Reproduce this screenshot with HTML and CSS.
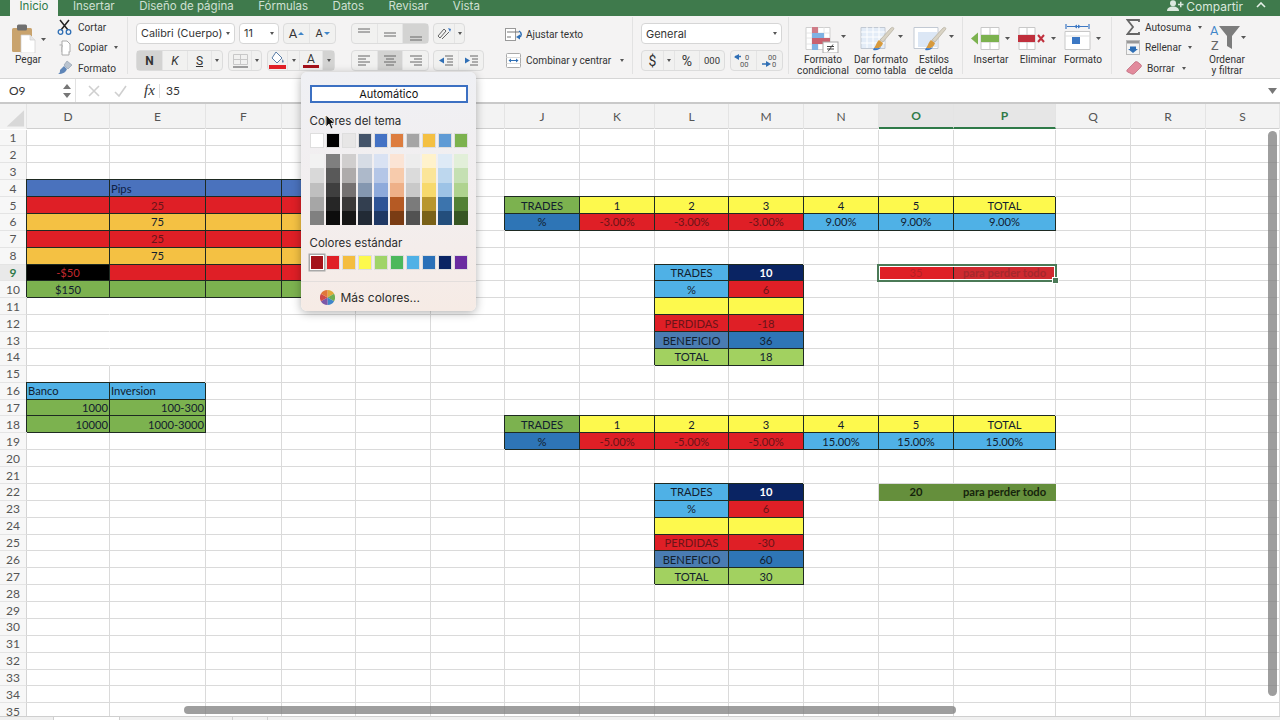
FILE: index.html
```html
<!DOCTYPE html>
<html lang="es">
<head>
    <meta charset="UTF-8">
    <title>Excel - Inicio</title>
    <link rel="stylesheet" href="styles.css">
</head>
<body>
    <!-- pestañas -->
    <div class="tabbar">
        <div class="tab active">Inicio</div>
        <div class="tab">Insertar</div>
        <div class="tab">Diseño de página</div>
        <div class="tab">Fórmulas</div>
        <div class="tab">Datos</div>
        <div class="tab">Revisar</div>
        <div class="tab">Vista</div>
        <div class="share">
            <svg width="17" height="12" viewBox="0 0 17 12"><circle cx="6" cy="3.2" r="3" fill="#dbe8de"/><path d="M0 11c0-3 2.5-4.5 6-4.5s6 1.500 6 4.5z" fill="#dbe8de"/><path d="M11 4.5h5.5M13.75 1.8v5.4" stroke="#dbe8de" stroke-width="1.5"/></svg>
            <span>Compartir</span>
            <svg class="chev" width="10" height="6" viewBox="0 0 10 6"><path d="M1 5l4-4 4 4" fill="none" stroke="#e6f0e8" stroke-width="1.6"/></svg>
        </div>
    </div>

    <!-- cinta -->
    <div class="ribbon">
        <div class="group g-clip">
            <div class="big paste">
                <svg width="38" height="30" viewBox="0 0 38 30"><rect x="1" y="5" width="20" height="24" rx="1.5" fill="#c9a36d"/><rect x="6" y="1.5" width="10" height="6" rx="1.5" fill="#6f6f6f"/><path d="M10 12h9l5 5v13H10z" fill="#fff" stroke="#cfcfcf" stroke-width=".7"/><path d="M19 12v5h5" fill="#e6e6e6" stroke="#cfcfcf" stroke-width=".7"/><path d="M30 15h5l-2.5 3z" fill="#555"/></svg>
                <span>Pegar</span>
            </div>
            <div class="small-stack">
                <div class="small">
                    <svg width="16" height="16" viewBox="0 0 16 16"><path d="M3 1l8 10M12 1L4 11" stroke="#222" stroke-width="1.5"/><circle cx="3.5" cy="13" r="2.3" fill="none" stroke="#2f6fb5" stroke-width="1.3"/><circle cx="11.5" cy="13" r="2.3" fill="none" stroke="#2f6fb5" stroke-width="1.3"/></svg>
                    <span>Cortar</span>
                </div>
                <div class="small">
                    <svg width="16" height="16" viewBox="0 0 16 16"><path d="M5 1h5l3 3v8H5z" fill="#fff" stroke="#aaa"/><path d="M2.5 5H5v10h7v-3" fill="#fff" stroke="#aaa"/></svg>
                    <span>Copiar</span><i class="caret"></i>
                </div>
                <div class="small">
                    <svg width="16" height="16" viewBox="0 0 16 16"><path d="M10 1l5 4-4 4-4-4z" fill="#b9c3cf" stroke="#8b98a8" stroke-width=".6"/><path d="M7 6l3 3c-1 3-4 5-9 5 2-1 2-2 2-4z" fill="#5f86b8"/></svg>
                    <span>Formato</span>
                </div>
            </div>
        </div>

        <div class="group g-font">
            <div class="row">
                <div class="select s-font"><span>Calibri (Cuerpo)</span><i class="caret"></i></div>
                <div class="select s-size"><span>11</span><i class="caret"></i></div>
                <div class="btns b-size">
                    <div class="btn w26"><span class="big-a">A</span><i class="tri-up"></i></div>
                    <div class="btn w25"><span class="mid-a">A</span><i class="tri-down"></i></div>
                </div>
            </div>
            <div class="row wide">
                <div class="btns b-style">
                    <div class="btn w26 pressed bold-n">N</div>
                    <div class="btn w25 ital">K</div>
                    <div class="btn w24 under">S</div>
                    <div class="btn w10"><i class="caret"></i></div>
                </div>
                <div class="btns b-border">
                    <div class="btn w23">
                        <svg width="15" height="14" viewBox="0 0 15 14"><path d="M.5.5h14v10H.5zM7.5.5v10M.5 5.5h14" fill="none" stroke="#c8c8c8"/><path d="M0 13h15" stroke="#666" stroke-width="1.2"/></svg>
                    </div>
                    <div class="btn w9"><i class="caret"></i></div>
                </div>
                <div class="btns b-color">
                    <div class="btn w20">
                        <svg width="17" height="19" viewBox="0 0 17 19"><path d="M7 1l6 6-5 5-5-5z" fill="#fff" stroke="#5b7fa8"/><path d="M13.5 8c1 1.5 1.5 2.5 1 3.3-.6.7-1.5.3-1.5-.6z" fill="#5b7fa8"/><rect x="0" y="14" width="17" height="4" fill="#e01f26"/></svg>
                    </div>
                    <div class="btn w12"><i class="caret"></i></div>
                    <div class="btn w23 color-a"><span>A</span><b></b></div>
                    <div class="btn w11 pressed"><i class="caret"></i></div>
                </div>
            </div>
        </div>

        <div class="group g-align">
            <div class="row">
                <div class="btns b-al">
                    <div class="btn"><svg width="14" height="14" viewBox="0 0 14 14"><path d="M1 2h12M1 5h12" stroke="#666"/></svg></div>
                    <div class="btn"><svg width="14" height="14" viewBox="0 0 14 14"><path d="M1 6h12M1 9h12" stroke="#666"/></svg></div>
                    <div class="btn pressed"><svg width="14" height="14" viewBox="0 0 14 14"><path d="M1 10h12M1 13h12" stroke="#666"/></svg></div>
                </div>
                <div class="btns b-orient">
                    <div class="btn w21"><svg width="16" height="15" viewBox="0 0 16 15"><path d="M2 10l6-7 2 2-6 7zM6 13l7-7" fill="none" stroke="#666"/><path d="M12 2l3 1-1 3z" fill="#3c78c4"/></svg></div>
                    <div class="btn w9"><i class="caret"></i></div>
                </div>
            </div>
            <div class="row">
                <div class="btns b-al">
                    <div class="btn"><svg width="14" height="11" viewBox="0 0 14 11"><path d="M1 1h12M1 4h8M1 7h12M1 10h8" stroke="#666"/></svg></div>
                    <div class="btn pressed"><svg width="14" height="11" viewBox="0 0 14 11"><path d="M1 1h12M3 4h8M1 7h12M3 10h8" stroke="#666"/></svg></div>
                    <div class="btn"><svg width="14" height="11" viewBox="0 0 14 11"><path d="M1 1h12M5 4h8M1 7h12M5 10h8" stroke="#666"/></svg></div>
                </div>
                <div class="btns b-indent">
                    <div class="btn w25"><svg width="15" height="11" viewBox="0 0 15 11"><path d="M6 1h8M8 4h6M8 7h6M6 10h8" stroke="#666"/><path d="M5 2.5v6L0 5.5z" fill="#2f6fb5"/></svg></div>
                    <div class="btn w24"><svg width="15" height="11" viewBox="0 0 15 11"><path d="M6 1h8M8 4h6M8 7h6M6 10h8" stroke="#666"/><path d="M1 2.5v6l5-3z" fill="#2f6fb5"/></svg></div>
                </div>
            </div>
        </div>

        <div class="group g-wrap">
            <div class="wrap-item">
                <svg width="17" height="13" viewBox="0 0 17 13"><rect x=".5" y=".5" width="10" height="12" fill="#fff" stroke="#999"/><path d="M2 4h12M2 9h4" stroke="#777"/><path d="M14 3c3 2 3 5 0 6" fill="none" stroke="#2f6fb5" stroke-width="1.5"/><path d="M15 6.5v5l-4-2.5z" fill="#2f6fb5"/></svg>
                <span>Ajustar texto</span>
            </div>
            <div class="wrap-item">
                <svg width="15" height="15" viewBox="0 0 15 15"><rect x=".5" y=".5" width="14" height="14" rx="1" fill="#fff" stroke="#aaa"/><path d="M.5 4.5h14M.5 10.5h14" stroke="#ddd"/><path d="M3 7.5h9" stroke="#2f6fb5"/><path d="M5 5.5l-2.5 2 2.500 2zM10 5.5l2.5 2-2.5 2z" fill="#2f6fb5"/></svg>
                <span>Combinar y centrar</span><i class="caret"></i>
            </div>
        </div>

        <div class="group g-num">
            <div class="select s-num"><span>General</span><i class="caret"></i></div>
            <div class="row wide">
                <div class="btns b-money">
                    <div class="btn w22 money">$</div>
                    <div class="btn w11"><i class="caret"></i></div>
                    <div class="btn w25 money">%</div>
                    <div class="btn w24 thousands">000</div>
                </div>
                <div class="btns b-dec">
                    <div class="btn w26"><svg width="19" height="15" viewBox="0 0 19 15"><path d="M5 1v6L0 4z" fill="#2f6fb5"/><path d="M1 3.5h6" stroke="#2f6fb5" stroke-width="1.5"/><text x="11" y="6.5" class="dec-text">0</text><text x="6" y="14" class="dec-text">00</text></svg></div>
                    <div class="btn w25"><svg width="19" height="15" viewBox="0 0 19 15"><path d="M6 8v6l5-3z" fill="#2f6fb5"/><path d="M2 11h6" stroke="#2f6fb5" stroke-width="1.5"/><text x="8" y="6.5" class="dec-text">00</text><text x="12" y="14" class="dec-text">0</text></svg></div>
                </div>
            </div>
        </div>

        <div class="group g-styles">
            <div class="big w62">
                <svg width="46" height="30" viewBox="0 0 46 30"><path d="M6 4.5h24v22H6z" fill="#fff" stroke="#cfcfcf"/><path d="M6 10h24M6 15h24M6 21h24M12 4v22M18 4v22M24 4v22" stroke="#e0e0e0" stroke-width=".8"/><rect x="12" y="4" width="6" height="6" fill="#cf7c88"/><rect x="12" y="10" width="12" height="5" fill="#7fb2e3"/><rect x="12" y="15" width="18" height="6" fill="#c9626f"/><rect x="12" y="21" width="6" height="6" fill="#7fb2e3"/><rect x="23" y="19" width="15" height="11" fill="#fff" stroke="#aaa"/><path d="M27 23.5h7M27 26h7M33 21.5l-5 7" stroke="#444"/><path d="M41 12h5l-2.5 3z" fill="#555"/></svg>
                <span>Formato<br>condicional</span>
            </div>
            <div class="big w54">
                <svg width="46" height="30" viewBox="0 0 46 30"><path d="M3 4.5h24v21H3z" fill="#e3ecf7" stroke="#c2c9d3"/><path d="M3 9h24M3 14h24M3 20h24M9 4v21M15 4v21M21 4v21" stroke="#fff"/><path d="M33 5c2-1.5 3.5 0 2.5 1.5L25 19l-3-2z" fill="#d9d3c4" stroke="#a9a392" stroke-width=".6"/><path d="M21 17l4 3c-1 4-4 6-9 5 2-2 2-5 5-8z" fill="#d79a3d"/><path d="M16 25c2 .5 5 .5 7-1-1 2-4 4-8 3z" fill="#3a78c5"/><path d="M40 12h5l-2.5 3z" fill="#555"/></svg>
                <span>Dar formato<br>como tabla</span>
            </div>
            <div class="big w52">
                <svg width="42" height="30" viewBox="0 0 42 30"><path d="M1 4.5h24v21H1z" fill="#fff" stroke="#c2c9d3"/><path d="M5 9h19v15H5z" fill="#dce7f5"/><path d="M30 5c2-1.5 3.5 0 2.5 1.5L22 19l-3-2z" fill="#d9d3c4" stroke="#a9a392" stroke-width=".6"/><path d="M18 17l4 3c-1 4-4 6-9 5 2-2 2-5 5-8z" fill="#d79a3d"/><path d="M13 25c2 .5 5 .5 7-1-1 2-4 4-8 3z" fill="#3a78c5"/><path d="M36 12h5l-2.5 3z" fill="#555"/></svg>
                <span>Estilos<br>de celda</span>
            </div>
        </div>

        <div class="group g-cells">
            <div class="big w40">
                <svg width="40" height="30" viewBox="0 0 40 30"><path d="M10 4.5h18v22H10zM19 4v22M10 12h18M10 19h18" fill="#fff" stroke="#c8c8c8"/><rect x="10" y="12" width="18" height="7" fill="#7cb24f"/><path d="M0 15.5l7-6v12z" fill="#7cb24f"/><path d="M34 14h5l-2.5 3z" fill="#555"/></svg>
                <span>Insertar</span>
            </div>
            <div class="big w54">
                <svg width="40" height="30" viewBox="0 0 40 30"><path d="M1 4.5h16v22H1zM9 4v22M1 12h16M1 19h16" fill="#fff" stroke="#c8c8c8"/><rect x="0" y="12" width="17" height="7" fill="#c0303d"/><path d="M20 12l6 7M26 12l-6 7" stroke="#c0303d" stroke-width="2"/><path d="M33 14h5l-2.5 3z" fill="#555"/></svg>
                <span>Eliminar</span>
            </div>
            <div class="big w36">
                <svg width="40" height="30" viewBox="0 0 40 30"><path d="M2 8.5h25v18H2z" fill="#fff" stroke="#c8c8c8"/><path d="M2 13h25" stroke="#ddd"/><rect x="9" y="14" width="8" height="7" fill="#3c78c4"/><path d="M3 1v5M26 1v5M4 3.5h21" stroke="#3c78c4" stroke-width="1.2"/><path d="M11 3.5l3-2v4zM18 3.5l-3-2v4z" fill="#3c78c4"/><path d="M33 14h5l-2.5 3z" fill="#555"/></svg>
                <span>Formato</span>
            </div>
        </div>

        <div class="group g-edit">
            <div class="small-stack narrow">
                <div class="small">
                    <svg width="14" height="16" viewBox="0 0 14 16"><path d="M13 3V1H1.5L7 8l-5.500 7H13v-2" fill="none" stroke="#666" stroke-width="1.8"/></svg>
                    <span>Autosuma</span><i class="caret"></i>
                </div>
                <div class="small">
                    <svg width="14" height="15" viewBox="0 0 14 15"><rect x=".5" y=".5" width="13" height="14" fill="#f3f3f3" stroke="#bbb"/><rect x="1" y="1" width="12" height="2.5" fill="#999"/><path d="M4 6.5h6V9h2l-5 4-5-4h2z" fill="#2f6fb5"/></svg>
                    <span>Rellenar</span><i class="caret"></i>
                </div>
                <div class="small">
                    <svg width="16" height="14" viewBox="0 0 16 14"><path d="M1 9l8-8c1-.6 2-.5 3 .3l3 2.5c.6.7.6 1.5 0 2.2l-6.500 6.500c-1 .8-2.500 1-3.500 0L1.500 11C.8 10.3.6 9.7 1 9z" fill="#e28a9c" stroke="#b96577" stroke-width=".7"/></svg>
                    <span>Borrar</span><i class="caret"></i>
                </div>
            </div>
            <div class="big sort">
                <svg width="38" height="30" viewBox="0 0 38 30">
                    <text x="2" y="12" class="sort-a">A</text><text x="3" y="27" class="sort-z">Z</text>
                    <path d="M11 3h21l-8 10v13l-5-3V13z" fill="#7c7c7c"/><path d="M33 13h5l-2.500 3z" fill="#555"/>
                </svg>
                <span>Ordenar<br>y filtrar</span>
            </div>
        </div>
    </div>

    <!-- barra de formula -->
    <div class="formula-bar">
        <div class="name-box">
            <span>O9</span>
            <svg width="8" height="14" viewBox="0 0 8 14"><path d="M0 5l4-5 4 5zM0 9l4 5 4-5z" fill="#777"/></svg>
        </div>
        <div class="fx-tools">
            <svg width="12" height="12" viewBox="0 0 12 12"><path d="M1 1l10 10M11 1L1 11" stroke="#cfcfcf" stroke-width="1.6"/></svg>
            <svg width="13" height="12" viewBox="0 0 13 12"><path d="M1 7l4 4 7-10" fill="none" stroke="#cfcfcf" stroke-width="1.6"/></svg>
            <span class="fx">fx</span>
        </div>
        <div class="formula-text">35</div>
        <svg class="formula-more" width="9" height="6" viewBox="0 0 9 6"><path d="M0 0h9L4.5 6z" fill="#777"/></svg>
    </div>

    <!-- hoja -->
    <div class="sheet">
        <div class="col-heads">
            <div class="corner"><svg width="27" height="25" viewBox="0 0 27 25"><path d="M25 6v17H7z" fill="#d8d8d8"/></svg></div>
            <div>D</div><div>E</div><div>F</div><div>G</div><div>H</div><div>I</div><div>J</div><div>K</div>
            <div>L</div><div>M</div><div>N</div><div class="on">O</div><div class="on">P</div><div>Q</div><div>R</div><div>S</div>
        </div>
        <div class="grid" id="grid"></div>
    </div>
    <div class="sheet-tabs">
        <div class="stab first"></div>
        <div class="stab current"></div>
        <div class="stab third"></div>
        <div class="stab fourth"></div>
    </div>

    <div class="vscroll"></div>
    <div class="hscroll"></div>

    <!-- menu de color -->
    <div class="color-menu">
        <div class="auto-btn">Automático</div>
        <div class="menu-title">Colores del tema</div>
        <div class="swatches" id="theme"></div>
        <div class="shades" id="shades"></div>
        <div class="menu-title second">Colores estándar</div>
        <div class="swatches" id="standard"></div>
        <div class="menu-sep"></div>
        <div class="more">
            <svg width="15" height="15" viewBox="0 0 16 16"><path d="M8 8V0a8 8 0 0 1 7 4z" fill="#e0a93a"/><path d="M8 8l7-4a8 8 0 0 1 0 8z" fill="#6fae54"/><path d="M8 8l7 4a8 8 0 0 1-7 4z" fill="#3f86c9"/><path d="M8 8v8a8 8 0 0 1-7-4z" fill="#7c58a8"/><path d="M8 8l-7 4a8 8 0 0 1 0-8z" fill="#cf4a4a"/><path d="M8 8L1 4a8 8 0 0 1 7-4z" fill="#e0773a"/></svg>
            <span>Más colores...</span>
        </div>
    </div>

    <svg class="cursor" width="11" height="16" viewBox="0 0 11 16"><path d="M1 1v12l3-3 2 5 2-1-2-4.5h4z" fill="#111" stroke="#fff" stroke-width=".8"/></svg>

    <script src="grid.js"></script>
</body>
</html>
```

FILE: styles.css
```css
html, body {
    margin: 0;
    height: 720px;
    overflow: hidden;
}
body {
    position: relative;
    display: flex;
    flex-direction: column;
    font-family: Roboto, "Liberation Sans", sans-serif;
    font-size: 10.1px;
    color: #333;
    background: #fff;
}

/* pestañas */
.tabbar {
    height: 16px;
    flex: none;
    display: flex;
    gap: 24.5px;
    padding-left: 10px;
    background: #3f7a4c;
    color: #cfe0d3;
    font-family: Inter, "Liberation Sans", sans-serif;
    font-size: 11.5px;
    line-height: 13px;
    overflow: hidden;
}
.tab.active {
    background: #f4f3f3;
    color: #2f7a48;
    padding: 0 9.5px;
    margin-right: -9.5px;
}
.share {
    margin-left: auto;
    display: flex;
    align-items: flex-start;
    gap: 2px;
    padding-right: 14px;
    font-size: 12px;
    color: #dbe8de;
}
.share .chev {
    margin: 2px 0 0 11px;
}

/* cinta */
.ribbon {
    height: 62px;
    flex: none;
    display: flex;
    background: #f4f3f3;
    border-bottom: 1px solid #d6d6d6;
}
.group {
    height: 57px;
    margin-top: 1px;
    padding-top: 6px;
    box-sizing: border-box;
    flex: none;
}
.g-clip, .g-wrap, .g-num, .g-styles, .g-cells {
    border-right: 1px solid #e2e2e2;
}
.g-clip { width: 128px; display: flex; padding: 0 0 0 11px; }
.g-font { width: 223px; padding-left: 8px; display: flex; flex-direction: column; gap: 6px; }
.g-align { width: 142px; display: flex; flex-direction: column; gap: 6px; }
.g-wrap { width: 140px; padding: 4px 0 0 12px; display: flex; flex-direction: column; }
.g-num { width: 156px; padding-left: 8px; display: flex; flex-direction: column; gap: 6px; }
.g-styles { width: 174px; padding-left: 3px; display: flex; }
.g-cells { width: 149px; padding-left: 8px; display: flex; }
.g-edit { width: 168px; padding: 0 0 0 14px; display: flex; }

.row {
    display: flex;
    gap: 4px;
    height: 21px;
}
.row.wide { gap: 5px; }
.select {
    height: 21px;
    box-sizing: border-box;
    display: flex;
    align-items: center;
    justify-content: space-between;
    padding: 0 4px;
    background: #fff;
    border: 1px solid #d6d6d6;
    border-radius: 4px;
    font-family: Inter, "Liberation Sans", sans-serif;
    font-size: 10.8px;
    flex: none;
}
.s-font { width: 99px; }
.s-size { width: 40px; }
.s-num { width: 141px; font-size: 11px; }
.caret {
    display: inline-block;
    flex: none;
    width: 0;
    height: 0;
    border-left: 2.5px solid transparent;
    border-right: 2.5px solid transparent;
    border-top: 3.5px solid #555;
}
.btns {
    display: flex;
    height: 21px;
    box-sizing: border-box;
    background: #f1f1f0;
    border: 1px solid #dcdcdc;
    border-radius: 4px;
}
.btn {
    display: flex;
    align-items: center;
    justify-content: center;
    height: 100%;
    box-sizing: border-box;
    flex: none;
    border-right: 1px solid #e4e4e4;
}
.btn:last-child { border-right: none; }
.btn.pressed { background: #d3d3d2; }
.w9 { width: 9px; }
.w10 { width: 10px; }
.w11 { width: 11px; }
.w12 { width: 12px; }
.w20 { width: 20px; }
.w21 { width: 21px; }
.w22 { width: 22px; }
.w23 { width: 23px; }
.w24 { width: 24px; }
.w25 { width: 25px; }
.w26 { width: 26px; }

.big-a { font-size: 13px; }
.mid-a { font-size: 11px; }
.tri-up, .tri-down {
    width: 0;
    height: 0;
    margin-left: 1px;
    border-left: 3px solid transparent;
    border-right: 3px solid transparent;
}
.tri-up { border-bottom: 3.5px solid #3f86c9; }
.tri-down { border-top: 3.5px solid #3f86c9; }
.bold-n { font-weight: 700; font-size: 12px; }
.ital { font-style: italic; font-size: 12px; }
.under { text-decoration: underline; font-size: 12px; }
.color-a {
    flex-direction: column;
    font-size: 12px;
    line-height: 12px;
}
.color-a b {
    display: block;
    width: 16px;
    height: 3.5px;
    background: #a5121a;
}
.money { font-size: 14px; }
.thousands { font-size: 9.5px; }
.dec-text { font-family: Roboto, sans-serif; font-size: 7.5px; fill: #555; }
.b-al { width: 78px; }
.b-al .btn { flex: 1; }

.big {
    display: flex;
    flex-direction: column;
    align-items: center;
    flex: none;
    text-align: center;
    line-height: 11px;
    white-space: nowrap;
}
.big svg { flex: none; margin-bottom: 1px; }
.w62 { width: 62px; }
.w54 { width: 54px; }
.w52 { width: 52px; }
.w40 { width: 40px; }
.w36 { width: 36px; }
.paste { padding-top: 6px; width: 38px; margin-right: 8px; align-items: flex-start; }
.paste span { padding-left: 4px; }
.sort { margin-left: 11px; width: 60px; padding-top: 6px; }
.sort-a { font-family: Roboto, sans-serif; font-size: 12.8px; fill: #3f86c9; }
.sort-z { font-family: Roboto, sans-serif; font-size: 12.8px; fill: #666; }

.small-stack {
    display: flex;
    flex-direction: column;
    flex: none;
}
.small-stack.narrow { width: 60px; }
.small {
    height: 20.5px;
    flex: none;
    display: flex;
    align-items: center;
    gap: 5px;
    white-space: nowrap;
}
.small svg { flex: none; }
.small .caret { margin-left: 2px; }
.wrap-item {
    height: 26px;
    flex: none;
    display: flex;
    align-items: center;
    gap: 4px;
    white-space: nowrap;
}
.wrap-item svg { width: 17px; flex: none; }
.wrap-item .caret { margin-left: 5px; }

/* barra de formula */
.formula-bar {
    height: 25px;
    flex: none;
    box-sizing: border-box;
    display: flex;
    align-items: center;
    background: #fff;
    border-bottom: 2px solid #c9c9c9;
    font-family: Lato, sans-serif;
    font-size: 12px;
}
.name-box {
    width: 76px;
    height: 100%;
    box-sizing: border-box;
    padding: 0 4px 0 9px;
    display: flex;
    align-items: center;
    justify-content: space-between;
    border-right: 1px solid #e2e2e2;
}
.fx-tools {
    width: 84px;
    height: 14px;
    box-sizing: border-box;
    padding-left: 12px;
    display: flex;
    align-items: center;
    gap: 14px;
    border-right: 1px solid #ddd;
}
.fx {
    font-family: "Liberation Serif", serif;
    font-style: italic;
    font-size: 15px;
    margin-left: 3px;
}
.formula-text { padding-left: 6px; }
.formula-more { margin-left: auto; margin-right: 3px; }

/* hoja */
.sheet {
    flex: 1;
    min-height: 0;
    overflow: hidden;
    font-family: Lato, sans-serif;
    font-size: 11.2px;
    color: #12202e;
    --cols: 27px 83px 96px 76px 74px 75px 74px 75px 75px 74px 75px 75px 75px 102px 75px 75px 74px;
}
.col-heads {
    display: grid;
    grid-template-columns: var(--cols);
    height: 25px;
    background: #f3f3f3;
    border-bottom: 1px solid #cfcfcf;
    box-sizing: border-box;
    color: #555;
    font-size: 12px;
}
.col-heads div {
    display: flex;
    align-items: center;
    justify-content: center;
    border-right: 1px solid #e4e4e4;
}
.col-heads .on {
    background: #e6e6e6;
    color: #2f7a48;
    font-weight: 700;
    border-bottom: 2px solid #2f7a48;
}
.corner { background: #f3f3f3; }
.grid {
    display: grid;
    margin-top: 0.6px;
    grid-template-columns: var(--cols);
    grid-auto-rows: 16.88px;
}
.rh {
    display: flex;
    align-items: center;
    justify-content: center;
    background: #f7f7f7;
    border-right: 1px solid #d4d4d4;
    border-bottom: 1px solid #e4e4e4;
    box-sizing: border-box;
    color: #555;
    font-size: 12px;
}
.rh.on {
    background: #e9e9e9;
    color: #2f7a48;
    font-weight: 700;
}
.cell {
    box-sizing: border-box;
    display: flex;
    align-items: center;
    justify-content: center;
    padding: 0 1px;
    border-right: 1px solid #dadada;
    border-bottom: 1px solid #dadada;
    white-space: nowrap;
}
.cell.filled {
    border-color: #1e2a22;
    box-shadow: -1px -1px 0 #1e2a22;
    position: relative;
}
.cell.left { justify-content: flex-start; }
.cell.right { justify-content: flex-end; }
.cell.no-right { border-right-color: transparent; }
.blue { background: #4a72bd; color: #0e2044; }
.red { background: #df1f26; color: #6a1418; }
.orange { background: #f4c143; }
.black { background: #000; color: #c2282e; }
.green { background: #7cb24f; }
.sky { background: #4fb1e6; }
.yellow { background: #fdf94d; }
.steel { background: #2e75b6; }
.steel2 { background: #4a7cb2; }
.navy { background: #0a2463; color: #fff; font-weight: 700; }
.lime { background: #a2d160; }
.cell.moss {
    background: #658f3c;
    border-color: #658f3c;
    font-weight: 700;
    color: #16240c;
}
.cell.dim { color: #b51f25; }
.cell.dim2 { background: #cf2a30; color: #a5282d; font-weight: 700; }
.selection {
    position: absolute;
    z-index: 2;
    left: -2px;
    top: -1px;
    width: 180px;
    height: 18.5px;
    box-sizing: border-box;
    border: 2px solid #4b7a57;
    box-shadow: inset 0 0 0 1px #fff;
}
.selection::after {
    content: "";
    position: absolute;
    right: -4px;
    bottom: -4px;
    width: 5px;
    height: 5px;
    background: #4b7a57;
    border: 1px solid #fff;
}
.sheet-tabs {
    height: 4px;
    flex: none;
    display: flex;
    background: #f0f0f0;
    border-top: 1px solid #cfcfcf;
    box-sizing: border-box;
}
.stab {
    height: 100%;
    flex: none;
    border-right: 1px solid #cfcfcf;
}
.stab.first { width: 53px; }
.stab.current { width: 65px; background: #fff; }
.stab.third { width: 112px; }
.stab.fourth { width: 34px; }

/* barras de desplazamiento */
.vscroll, .hscroll {
    position: absolute;
    background: rgba(125, 125, 125, 0.75);
    border-radius: 5px;
}
.vscroll { left: 1268px; top: 131px; width: 9px; height: 565px; }
.hscroll { left: 184px; top: 706px; width: 772px; height: 8px; }

/* menu de color */
.color-menu {
    position: absolute;
    left: 301px;
    top: 72px;
    width: 175px;
    height: 239px;
    box-sizing: border-box;
    padding: 13px 8px 0 8.5px;
    border-radius: 6px;
    background: linear-gradient(#eff0f4, #f3eeee 60%, #f6ebe5);
    box-shadow: 0 2px 10px rgba(0, 0, 0, 0.3);
    font-family: Inter, "Liberation Sans", sans-serif;
    font-size: 11.5px;
    color: #2c2c2c;
}
.auto-btn {
    height: 18px;
    box-sizing: border-box;
    border: 2px solid #3c70c2;
    background: #fff;
    color: #111;
    font-size: 11px;
    line-height: 14px;
    text-align: center;
}
.menu-title {
    margin-top: 11px;
    line-height: 14px;
    height: 14px;
}
.menu-title.second { margin-top: 11px; }
.swatches {
    display: grid;
    grid-template-columns: repeat(10, 14.5px);
    column-gap: 1.5px;
    margin-top: 5px;
}
.swatch {
    height: 14.5px;
    box-sizing: border-box;
    border: 1px solid #dedede;
}
.swatch.picked { box-shadow: 0 0 0 1.5px #a8a8a8; border-color: #fff; }
.shades {
    display: grid;
    grid-template-columns: repeat(10, 14.5px);
    column-gap: 1.5px;
    grid-auto-flow: column;
    grid-template-rows: repeat(5, 14.3px);
    margin-top: 6.5px;
}
.menu-sep {
    margin: 11px -8px 0 -8.5px;
    border-top: 1px solid #e3dedc;
}
.more {
    display: flex;
    align-items: center;
    gap: 6px;
    padding: 8px 0 0 10px;
    font-size: 12px;
}
.cursor {
    position: absolute;
    left: 325px;
    top: 114px;
}
```

FILE: grid.js
```js
// columnas de la hoja
const cols = ['D', 'E', 'F', 'G', 'H', 'I', 'J', 'K', 'L', 'M', 'N', 'O', 'P', 'Q', 'R', 'S'];

const cells = {};
function put(row, col, text, cls) {
    cells[col + row] = { text, cls };
}

// tabla de pips
[['blue', 4], ['red', 5], ['orange', 6], ['red', 7], ['orange', 8], ['red', 9], ['green', 10]].forEach(([color, row]) => {
    ['D', 'E', 'F', 'G'].forEach(c => put(row, c, '', color));
});
put(4, 'E', 'Pips', 'blue left');
put(5, 'E', '25', 'red');
put(6, 'E', '75', 'orange');
put(7, 'E', '25', 'red');
put(8, 'E', '75', 'orange');
put(9, 'D', '-$50', 'black');
put(10, 'D', '$150', 'green');

put(16, 'D', 'Banco', 'sky left');
put(16, 'E', 'Inversion', 'sky left');
put(17, 'D', '1000', 'green right');
put(17, 'E', '100-300', 'green right');
put(18, 'D', '10000', 'green right');
put(18, 'E', '1000-3000', 'green right');

function trades(row, loss, win) {
    put(row, 'J', 'TRADES', 'green');
    ['K', 'L', 'M', 'N', 'O'].forEach((c, i) => put(row, c, String(i + 1), 'yellow'));
    put(row, 'P', 'TOTAL', 'yellow');
    put(row + 1, 'J', '%', 'steel');
    ['K', 'L', 'M'].forEach(c => put(row + 1, c, loss, 'red'));
    ['N', 'O', 'P'].forEach(c => put(row + 1, c, win, 'sky'));
}
trades(5, '-3.00%', '9.00%');
trades(18, '-5.00%', '15.00%');

function summary(row, lost, gain, total) {
    put(row, 'L', 'TRADES', 'sky');
    put(row, 'M', '10', 'navy');
    put(row + 1, 'L', '%', 'sky');
    put(row + 1, 'M', '6', 'red');
    put(row + 2, 'L', '', 'yellow');
    put(row + 2, 'M', '', 'yellow');
    put(row + 3, 'L', 'PERDIDAS', 'red');
    put(row + 3, 'M', lost, 'red');
    put(row + 4, 'L', 'BENEFICIO', 'steel2');
    put(row + 4, 'M', gain, 'steel');
    put(row + 5, 'L', 'TOTAL', 'lime');
    put(row + 5, 'M', total, 'lime');
}
summary(9, '-18', '36', '18');
summary(22, '-30', '60', '30');

put(9, 'O', '35', 'red dim');
put(9, 'P', 'para perder todo', 'red dim2');
put(22, 'O', '20', 'moss');
put(22, 'P', 'para perder todo', 'moss');

const grid = document.getElementById('grid');
for (let r = 1; r <= 35; r++) {
    const head = document.createElement('div');
    head.className = r === 9 ? 'rh on' : 'rh';
    head.textContent = r;
    grid.appendChild(head);
    cols.forEach(c => {
        const el = document.createElement('div');
        const data = cells[c + r];
        el.className = 'cell';
        if (data) {
            el.className += ' ' + data.cls + (data.cls.includes('moss') ? '' : ' filled');
            el.textContent = data.text;
        } else if (c === 'D' && r >= 11 && r <= 14) {
            el.className += ' no-right';
        }
        if (c === 'O' && r === 9) {
            // seleccion O9:P9
            const sel = document.createElement('div');
            sel.className = 'selection';
            el.appendChild(sel);
        }
        grid.appendChild(el);
    });
}

// paleta
const theme = ['#ffffff', '#000000', '#e7e6e6', '#44546a', '#4472c4', '#dd7d3f', '#a5a5a5', '#f4c043', '#5f9bd5', '#7cb24f'];
const shades = [
    ['#f2f2f2', '#d9d9d9', '#bfbfbf', '#a6a6a6', '#808080'],
    ['#7f7f7f', '#595959', '#3f3f3f', '#262626', '#0d0d0d'],
    ['#d0cece', '#aeabab', '#757171', '#3b3838', '#171616'],
    ['#d6dce5', '#adb9ca', '#8497b0', '#333f50', '#222a35'],
    ['#d9e2f3', '#b4c6e7', '#8eaadb', '#2f5496', '#1f3864'],
    ['#fbe4d5', '#f7cbac', '#eeb088', '#b55a24', '#7a3c14'],
    ['#ededed', '#dbdbdb', '#c9c9c9', '#7b7b7b', '#525252'],
    ['#fff2cc', '#fbe599', '#f7d96c', '#b8952e', '#7a6118'],
    ['#deeaf6', '#bdd7ee', '#9dc3e6', '#3c74ad', '#234e7c'],
    ['#e2efd9', '#c5e0b3', '#afd38f', '#538135', '#375623']
];
const standard = ['#a5121a', '#e01f26', '#f4bd3f', '#fdf94d', '#a0d468', '#4cb85c', '#4fb1e6', '#2a70b8', '#0a2463', '#6a2ca0'];

function swatches(id, list) {
    const box = document.getElementById(id);
    list.forEach((color, i) => {
        const el = document.createElement('div');
        el.className = id === 'standard' && i === 0 ? 'swatch picked' : 'swatch';
        el.style.background = color;
        box.appendChild(el);
    });
}
swatches('theme', theme);
swatches('standard', standard);

const shadeBox = document.getElementById('shades');
shades.flat().forEach(color => {
    const el = document.createElement('div');
    el.style.background = color;
    shadeBox.appendChild(el);
});
```
